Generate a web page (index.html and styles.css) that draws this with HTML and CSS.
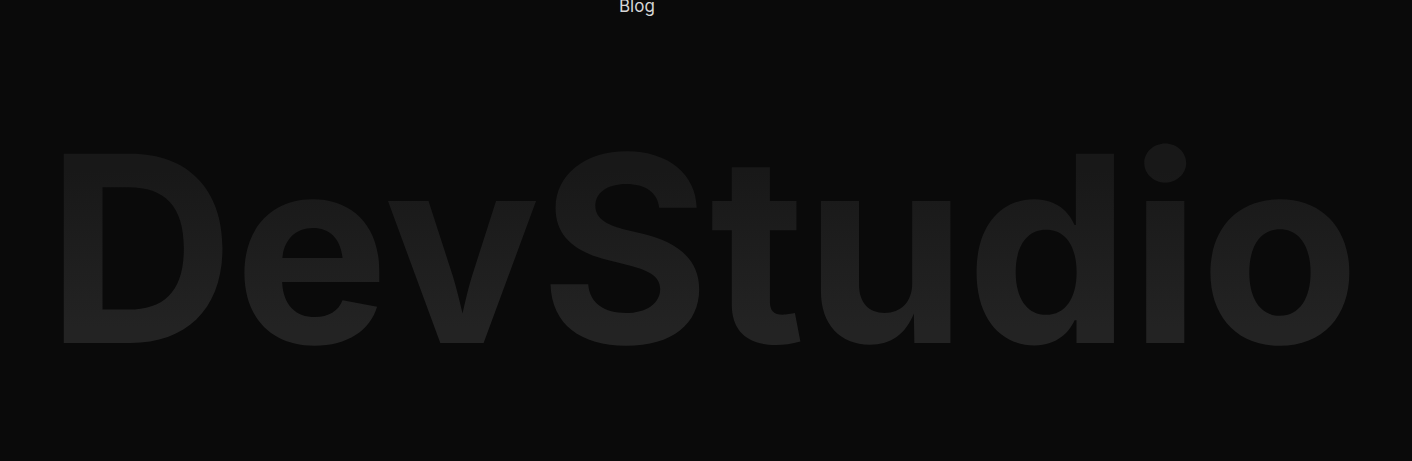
FILE: index.html
```html
<!DOCTYPE html>
<html lang="en">
<head>
<meta charset="utf-8">
<title>DevStudio</title>
<link rel="stylesheet" href="styles.css">
</head>
<body>
<nav class="nav"><a class="nav-link" href="#">Blog</a></nav>
<section class="hero">
  <h1 class="wordmark">DevStudio</h1>
</section>
</body>
</html>
```
FILE: styles.css
```css
html, body { margin: 0; padding: 0; }
body {
  background: #0a0a0a;
  height: 461px;
  overflow: hidden;
  font-family: Inter, "Liberation Sans", sans-serif;
}
.nav {
  display: flex;
  padding-left: 619px;
  height: 20px;
  margin-top: -4px;
}
.nav-link {
  color: #d6d6d6;
  text-decoration: none;
  font-size: 17px;
  line-height: 20px;
}
.hero {
  display: flex;
  justify-content: center;
  padding-top: 103px;
  padding-right: 6px;
}
.wordmark {
  margin: 0;
  font-size: 260px;
  font-weight: 700;
  line-height: 1;
  letter-spacing: -0.25px;
  color: #1e1e1e;
  background: linear-gradient(180deg, #181818 20%, #232323 80%);
  -webkit-background-clip: text;
  background-clip: text;
  -webkit-text-fill-color: transparent;
}
```
